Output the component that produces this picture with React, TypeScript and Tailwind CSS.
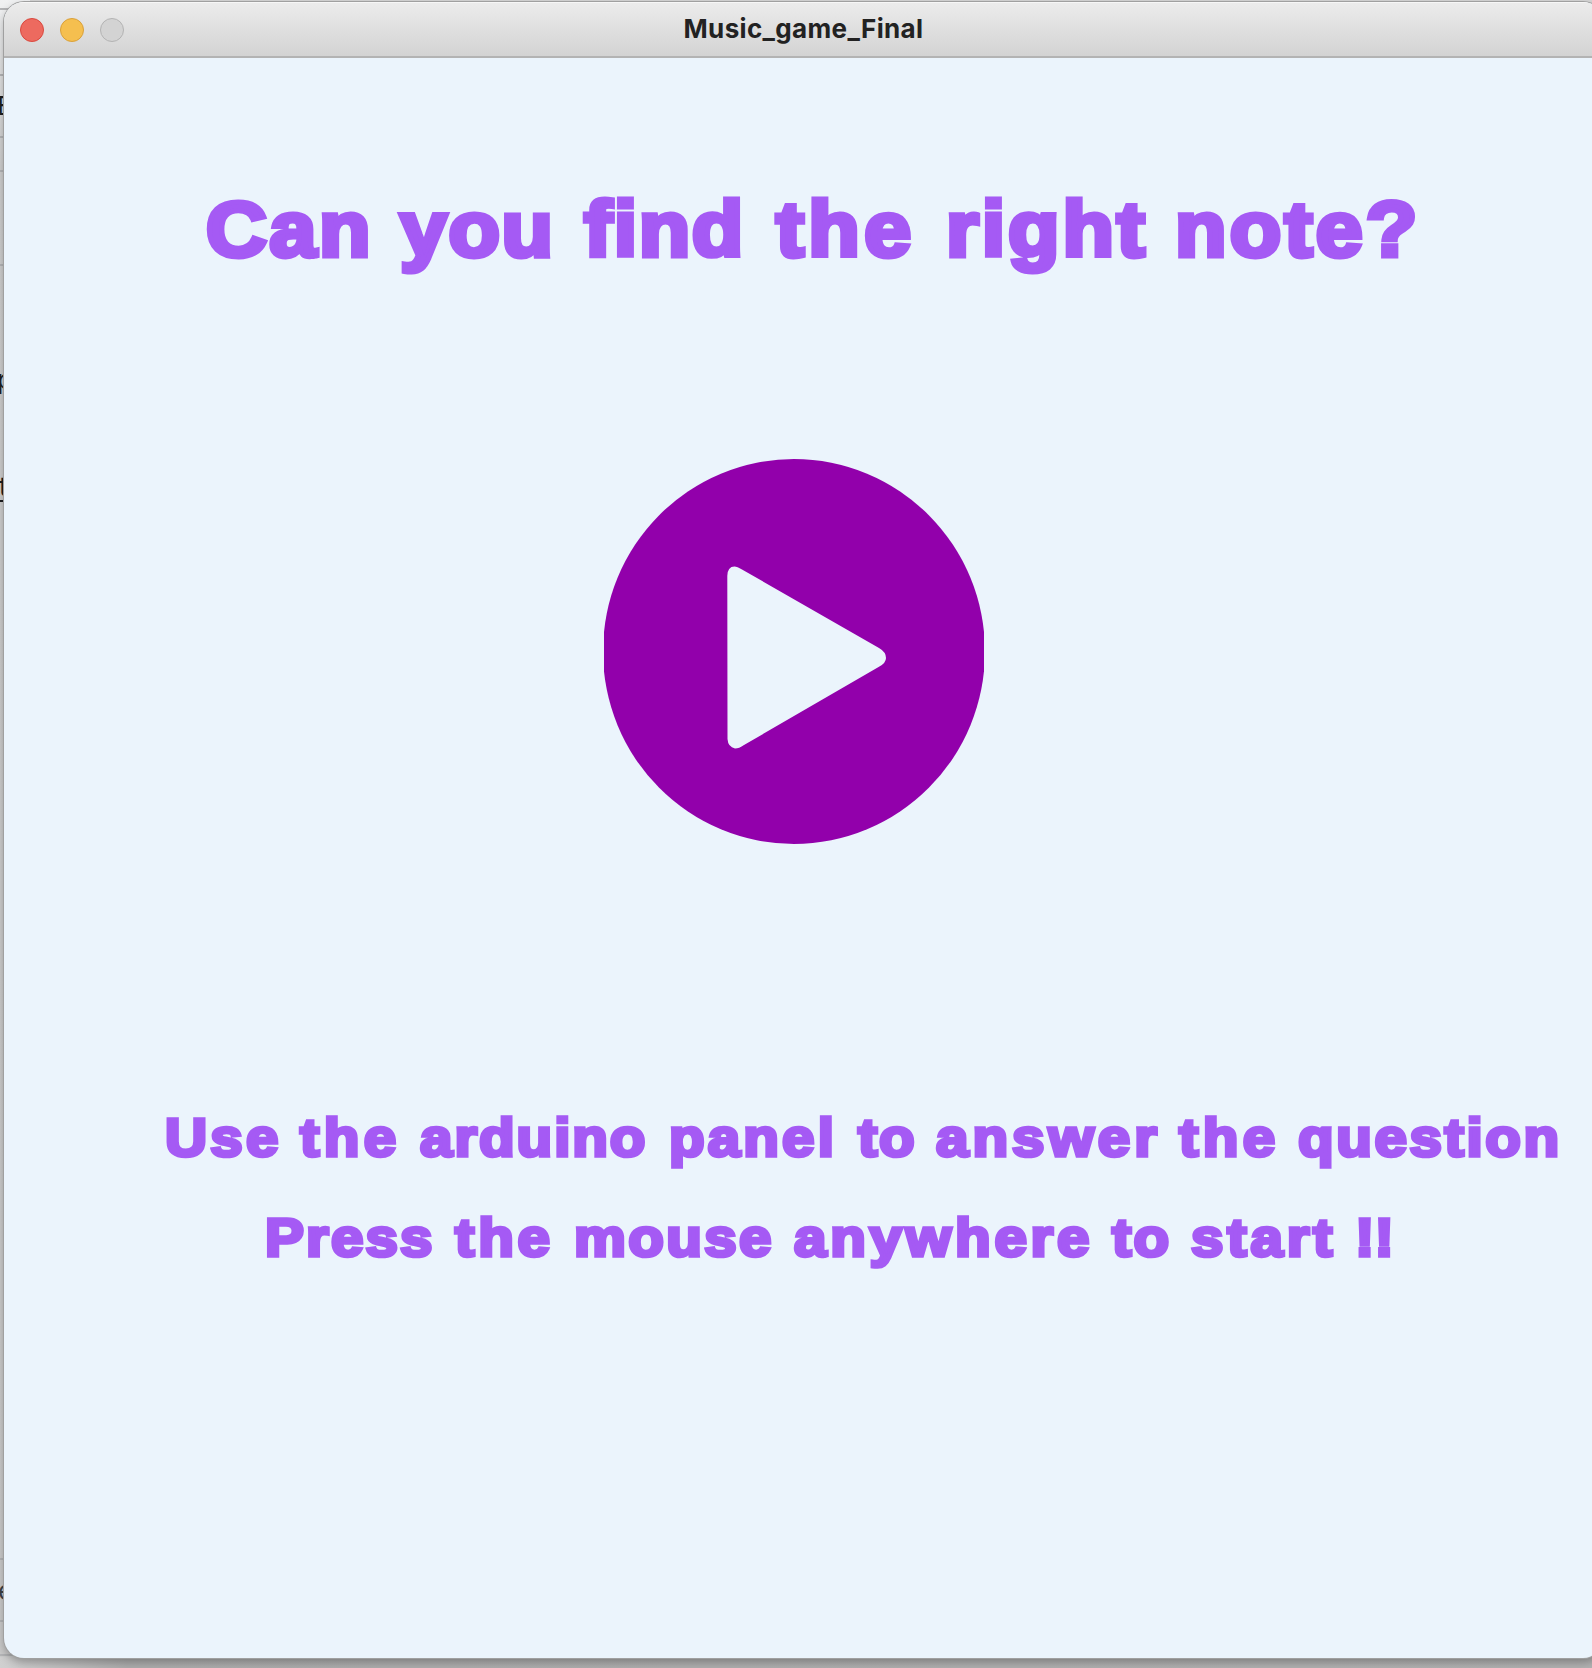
type Word = { text: string; className: string; tracking: string };

const heading: Word[] = [
  { text: "Can", className: "w-[194px]", tracking: "tracking-[2.5px]" },
  { text: "you", className: "w-[184px]", tracking: "tracking-[1.5px]" },
  { text: "find", className: "w-[192px]", tracking: "tracking-[1.5px]" },
  { text: "the", className: "w-[170px]", tracking: "tracking-[4px]" },
  { text: "right", className: "w-[229px]", tracking: "tracking-[2.7px]" },
  { text: "note?", className: "w-[250px]", tracking: "tracking-[3px]" },
];

const instruction: Word[] = [
  { text: "Use", className: "w-[135px]", tracking: "tracking-[3px]" },
  { text: "the", className: "w-[120px]", tracking: "tracking-[4px]" },
  { text: "arduino", className: "w-[249px]", tracking: "tracking-[1.8px]" },
  { text: "panel", className: "w-[189px]", tracking: "tracking-[2.9px]" },
  { text: "to", className: "w-[78px]", tracking: "tracking-[1.5px]" },
  { text: "answer", className: "w-[243px]", tracking: "tracking-[3.7px]" },
  { text: "the", className: "w-[119px]", tracking: "tracking-[4px]" },
  { text: "question", className: "w-[270px]", tracking: "tracking-[2.4px]" },
];

const start: Word[] = [
  { text: "Press", className: "w-[190px]", tracking: "tracking-[2px]" },
  { text: "the", className: "w-[119px]", tracking: "tracking-[3.5px]" },
  { text: "mouse", className: "w-[220px]", tracking: "tracking-[2.2px]" },
  { text: "anywhere", className: "w-[318px]", tracking: "tracking-[3.5px]" },
  { text: "to", className: "w-[79px]", tracking: "tracking-[2px]" },
  { text: "start", className: "w-[164px]", tracking: "tracking-[3.5px]" },
  { text: "!!", className: "w-[40px]", tracking: "tracking-[0px]" },
];

function Line({ words }: { words: Word[] }) {
  return (
    <>
      {words.map((w, i) => (
        <span key={i} className={`inline-block whitespace-nowrap ${w.className} ${w.tracking}`}>
          <span className="inline-block origin-left scale-x-[1.08]">{w.text}</span>{" "}
        </span>
      ))}
    </>
  );
}

function Behind() {
  return (
    <div className="absolute inset-y-0 left-0 w-[30px] overflow-hidden bg-linear-to-b from-[#f0f1f2] via-[#cfcfcf] via-10% to-[#cbcbcb] font-['Inter',sans-serif] text-[26px] leading-none text-[#1d1d1f]">
      {[8, 74, 136, 170, 264, 1558, 1620, 1654].map((y) => (
        <div key={y} className="absolute left-0 h-[2px] w-full bg-[#b4b5b7]" style={{ top: y }} />
      ))}
      <span className="absolute -left-[3px] top-[93px]">E</span>
      <span className="absolute -left-[3px] top-[367px]">p</span>
      <span className="absolute -left-[1px] top-[474px] underline underline-offset-4">t</span>
      <span className="absolute -left-[2px] top-[1578px] text-[#3c4045]">e</span>
    </div>
  );
}

export default function App() {
  return (
    <div className="relative h-[1668px] w-[1592px] overflow-hidden bg-[#d6d6d6]">
      <Behind />
      <div className="absolute inset-x-0 bottom-0 h-[11px] bg-linear-to-r from-[#d0d0d0] via-[#adadad] via-8% to-[#b2b2b2]" />
      <main className="relative ml-1 mt-[2px] flex h-[1656px] w-[1599px] flex-col overflow-hidden rounded-[20px] bg-[#ebf4fc] shadow-[0_0_0_1px_#a0a0a0,0_4px_10px_rgba(0,0,0,0.3)]">
        <header className="relative flex h-[56px] shrink-0 items-center justify-center border-b-2 border-[#b3b3b3] bg-linear-to-b from-[#ececec] to-[#d3d3d3] shadow-[inset_0_1px_0_#f7f7f7]">
          <div className="absolute left-4 top-4 flex gap-4">
            <span className="size-6 rounded-full border border-[#d9493f] bg-[#ed6a5f]" />
            <span className="size-6 rounded-full border border-[#d9a03a] bg-[#f5bf4f]" />
            <span className="size-6 rounded-full border border-[#b3b3b3] bg-[#d3d3d3]" />
          </div>
          <h1 className="font-['Inter',sans-serif] text-[26px] font-bold leading-none tracking-[0.35px] text-[#222]">
            Music_game_Final
          </h1>
        </header>
        <section className="flex flex-col whitespace-nowrap font-['Liberation_Sans',Arial,sans-serif] font-bold text-[#a55af4]">
          <h2 className="ml-[202px] mt-[116px] h-[110px] text-[78px] leading-[110px] [-webkit-text-stroke:5px_#a55af4]">
            <Line words={heading} />
          </h2>
          <svg className="ml-[600px] mt-[174px] h-[386px] w-[380px]" viewBox="0 0 380 386" role="img" aria-label="Play">
            <ellipse cx="190" cy="193.500" rx="191" ry="192.500" fill="#9200ab" />
            <path
              d="M123.300 118 Q123.500 108.500 130.500 108.500 Q133 108.500 138 111.500 L275 190 Q282 194 282 200 Q282 205 275 208.800 L140 287 Q135 290.500 131 290.500 Q124 289 123.500 281 Z"
              fill="#ebf4fc"
            />
          </svg>
          <p className="ml-[161px] mt-[253px] h-[80px] text-[54px] leading-[80px] [-webkit-text-stroke:3.6px_#a55af4]">
            <Line words={instruction} />
          </p>
          <p className="ml-[261px] mt-[20px] h-[80px] text-[54px] leading-[80px] [-webkit-text-stroke:3.6px_#a55af4]">
            <Line words={start} />
          </p>
        </section>
      </main>
    </div>
  );
}
